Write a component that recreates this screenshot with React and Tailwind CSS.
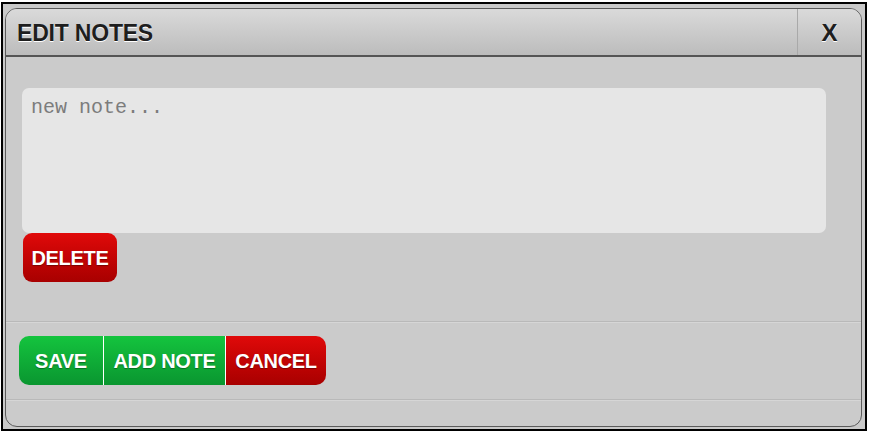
import React from 'react';

// Edit-notes dialog, framed the way the screenshot was captured.
const FONT = { fontFamily: '"Liberation Sans", Arial, sans-serif' };

function Btn({ children, color, className = '' }) {
  const bg =
    color === 'red'
      ? 'bg-gradient-to-b from-[#e00a0a] to-[#a80000]'
      : 'bg-gradient-to-b from-[#14c43e] to-[#0a9630]';
  return (
    <button
      className={`${bg} ${className} h-[49px] flex items-center justify-center text-white font-bold text-[20px] tracking-[-0.3px] [text-shadow:0_1px_1px_rgba(0,0,0,0.35)]`}
    >
      {children}
    </button>
  );
}

export default function App() {
  return (
    <div className="w-[872px] h-[432px] bg-white pt-[2px] pl-[1px]" style={FONT}>
      <div className="w-[866px] h-[429px] border-2 border-black bg-[#c9c9c9] pt-[4px] pl-[2px]">
        <div className="w-[857px] h-[419px] rounded-[12px] border border-[#5a5a5a] bg-[#cbcbcb] overflow-hidden flex flex-col">
          <div className="h-[48px] flex border-b-2 border-[#555] bg-gradient-to-b from-[#dadada] to-[#bcbcbc]">
            <div className="flex-1 flex items-center pl-[11px] pt-[2px] text-[23px] font-bold text-[#1e1e1e] tracking-[-0.2px] [text-shadow:0_1px_0_#fff]">
              EDIT NOTES
            </div>
            <div className="w-[64px] border-l border-[#a9a9a9] flex items-center justify-center pt-[2px] text-[24px] font-bold text-[#1e1e1e] [text-shadow:0_1px_0_#fff]">
              X
            </div>
          </div>

          <div className="flex flex-col pl-[16px] pt-[31px] h-[264px]">
            <div className="w-[804px] h-[145px] rounded-[7px] bg-[#e6e6e6] px-[9px] pt-[5px] text-[20px] text-[#7c7c7c]" style={{ fontFamily: '"Liberation Mono", "Courier New", monospace' }}>
              new note...
            </div>
            <Btn color="red" className="w-[94px] ml-[1px] rounded-[9px]">DELETE</Btn>
          </div>

          <div className="border-t border-[#b9b9b9] shadow-[inset_0_1px_0_#d6d6d6] h-[78px] pl-[13px] pt-[14px] flex">
            <Btn color="green" className="w-[84px] rounded-l-[10px]">SAVE</Btn>
            <div className="w-[1px] h-[49px] bg-white" />
            <Btn color="green" className="w-[121px]">ADD NOTE</Btn>
            <div className="w-[1px] h-[49px] bg-white" />
            <Btn color="red" className="w-[100px] rounded-r-[10px]">CANCEL</Btn>
          </div>

          <div className="flex-1 border-t border-[#b9b9b9] shadow-[inset_0_1px_0_#d6d6d6]" />
        </div>
      </div>
    </div>
  );
}
